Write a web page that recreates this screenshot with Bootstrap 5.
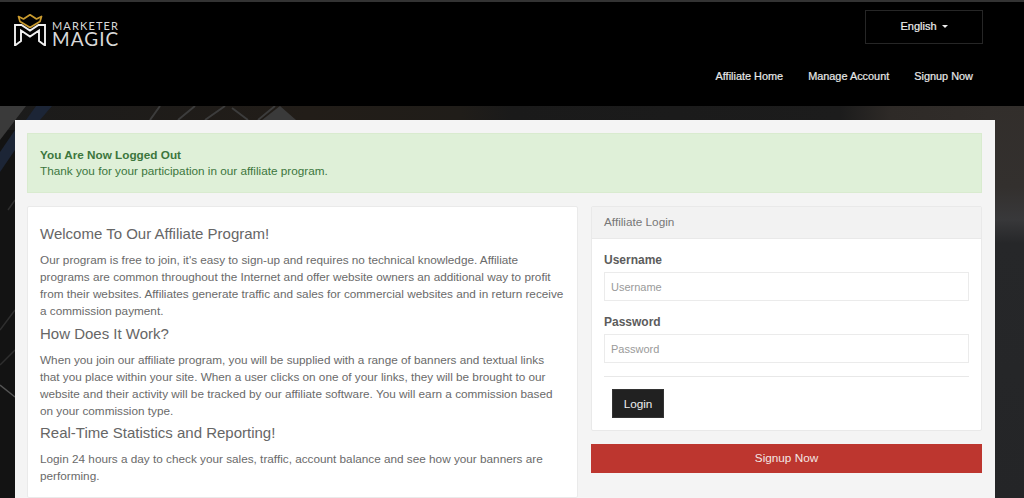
<!DOCTYPE html>
<html lang="en">
<head>
<meta charset="utf-8">
<title>Affiliate Program</title>
<link href="https://cdn.jsdelivr.net/npm/bootstrap@5.3.0/dist/css/bootstrap.min.css" rel="stylesheet">
<style>
html,body{height:498px;overflow:hidden}
body{font-family:"Liberation Sans",Arial,sans-serif;font-size:11.75px;line-height:17px;color:#6a6a6a;background:#1a1a1b;position:relative}
.scene{position:absolute;left:0;top:0;width:1024px;height:498px;z-index:0}
.site-top{position:relative;z-index:1;background:#000;height:106px;border-top:2px solid #333;display:flex;flex-direction:column;padding:0}
.top-line{display:flex;justify-content:space-between;align-items:flex-start;padding:8px 41px 0 14px;height:64px}
.brand{display:flex;align-items:flex-end;gap:6px;margin-top:4px;text-decoration:none;padding:0}
.brand-words{display:flex;flex-direction:column;font-family:"Lato","Liberation Sans",sans-serif;color:#d8d8d8;font-weight:400;line-height:1}
.brand-a{font-size:11px;letter-spacing:1.15px;line-height:12px;height:14px;padding-top:2px}
.brand-b{font-size:19px;letter-spacing:1.05px;line-height:14px;height:14px}
.lang-btn{width:118px;height:34px;border:1px solid #262626;border-radius:0;background:transparent;color:#eee;font-size:11px;padding:0 0 2px;display:flex;align-items:center;justify-content:center;-webkit-text-stroke:.2px #eee}
.lang-btn:hover,.lang-btn:active{background:transparent;color:#eee;border-color:#262626}
.lang-btn::after{margin-left:5px;border-top-width:.3em;border-left-width:.3em;border-right-width:.3em;vertical-align:middle}
.top-links{justify-content:flex-end;padding-right:51px;gap:25px;margin-top:2px}
.top-links .nav-link{padding:0;color:#e8e8e8;font-size:10.9px;font-weight:400;line-height:17px;-webkit-text-stroke:.2px #e8e8e8}
.sheet{position:relative;z-index:1;margin:14px 29px 0 15px;background:#f4f4f4;height:378px;padding:13px 13px 0 12px;overflow:hidden}
.note{background:#dff0d8;color:#3c763d;border:1px solid #d9ebcf;border-radius:0;padding:13px 12px;margin:0 0 13px;height:60px;line-height:16px;font-size:11.75px}
.note b{display:block;font-weight:700}
.cols{display:flex;gap:13px;align-items:flex-start}
.intro{width:551px;background:#fff;border:1px solid #eaeaea;border-radius:2px;height:292px;padding:13px 12px 0;flex:none}
.intro h4{font-size:15px;font-weight:400;line-height:18px;color:#666;margin:5.5px 0 8px}
.intro h4:first-child{margin-top:5px}
.intro p{margin:0}
.side{width:391px;flex:none}
.login-card{border:1px solid #e9e9e9;border-radius:2px;background:#fff;--bs-card-inner-border-radius:0;margin-bottom:13px}
.login-card .card-header{background:#f2f2f2;border-bottom:1px solid #e9e9e9;height:32px;padding:6px 12px;color:#777;line-height:17px;font-size:11.75px;border-radius:0}
.login-card .card-body{padding:13px 12px 12px;height:191px;color:#666}
.login-card .form-label{font-weight:700;color:#5c5c5c;margin:0 0 3px;display:block;font-size:12px;line-height:17px}
.field{height:29px;border:1px solid #ebebeb;border-radius:0;font-size:11px;padding:0 6px;box-shadow:none}
.field::placeholder{color:#9a9a9a}
.stack{margin-bottom:13px}
.rule{margin:13px 0 12px;border:0;border-top:1px solid #e8e8e8;opacity:1}
.go{background:#212121;color:#eee;border:1px solid #333;border-radius:0;width:52px;height:29px;padding:0;font-size:11.75px;margin-left:8px}
.go:hover{background:#212121;color:#eee}
.join{background:#bd362f;border:0;border-radius:0;color:#f3e6e4;height:29px;width:391px;padding:0 0 2px;font-size:11.75px;display:block}
.join:hover{background:#bd362f;color:#f3e6e4}
</style>
</head>
<body>
<svg class="scene" viewBox="0 0 1024 498" aria-hidden="true">
<defs>
<linearGradient id="rs" x1="0" y1="0" x2="0" y2="1"><stop offset="0" stop-color="#322e2b"/><stop offset=".22" stop-color="#33302e"/><stop offset=".3" stop-color="#38383a"/><stop offset=".36" stop-color="#262729"/><stop offset="1" stop-color="#242527"/></linearGradient>
<linearGradient id="ts" x1="0" y1="0" x2="1" y2="0"><stop offset="0" stop-color="#1b1b1b"/><stop offset=".3" stop-color="#221d18"/><stop offset=".45" stop-color="#201d19"/><stop offset=".5" stop-color="#1a1a1a"/><stop offset=".82" stop-color="#1c1c1c"/><stop offset=".87" stop-color="#2e2a27"/><stop offset="1" stop-color="#322e2b"/></linearGradient>
</defs>
<rect x="0" y="100" width="1024" height="30" fill="url(#ts)"/>
<rect x="0" y="130" width="15" height="368" fill="#131313"/>
<rect x="990" y="100" width="34" height="398" fill="url(#rs)"/>
<polygon points="0,106 26,106 0,140" fill="#3a3a3a"/>
<polygon points="36,106 52,106 40,120 26,120" fill="#1c2536"/>
<polygon points="15,130 15,150 0,172 0,152" fill="#1c2536"/>
<g stroke="#3c3c3c" stroke-width="2" fill="none">
<path d="M150 120 160 106M178 120 195 106M205 120 225 106M232 108 248 120M258 120 275 106"/>
</g>
<g stroke="#2e2e2e" stroke-width="1.5" fill="none">
<path d="M0 330 15 310M0 365 15 350M8 210 15 200"/>
</g>
<polygon points="262,120 280,106 296,120" fill="#3a3a3a"/>
<path d="M0 385 15 397" stroke="#555" stroke-width="1.5"/>
</svg>

<header class="site-top">
  <div class="top-line">
    <a class="brand" href="#">
      <svg width="32" height="32" viewBox="4 4 32 32" aria-hidden="true">
        <path d="M8.5 6.5 13.5 9 20 4.8 26.5 9 31.5 6.5 30 11.5 20 17.5 10 11.5Z" fill="none" stroke="#c99a2e" stroke-width="1.7" stroke-linejoin="round"/>
        <path d="M11 31V20.5L20 26.5 29 20.5V31L35 35.5V15H28.5L20 20.5 11.5 15H5V35.5Z" fill="none" stroke="#f0f0f0" stroke-width="1.9" stroke-linejoin="miter"/>
      </svg>
      <span class="brand-words"><span class="brand-a">MARKETER</span><span class="brand-b">MAGIC</span></span>
    </a>
    <div class="dropdown">
      <button class="btn lang-btn dropdown-toggle" type="button" data-bs-toggle="dropdown" aria-expanded="false">English</button>
      <ul class="dropdown-menu"><li><a class="dropdown-item" href="#">English</a></li></ul>
    </div>
  </div>
  <nav class="nav top-links">
    <a class="nav-link" href="#">Affiliate Home</a>
    <a class="nav-link" href="#">Manage Account</a>
    <a class="nav-link" href="#">Signup Now</a>
  </nav>
</header>

<main class="sheet">
  <div class="alert note" role="alert"><b>You Are Now Logged Out</b>Thank you for your participation in our affiliate program.</div>
  <div class="cols">
    <section class="intro">
      <h4>Welcome To Our Affiliate Program!</h4>
      <p>Our program is free to join, it's easy to sign-up and requires no technical knowledge. Affiliate programs are common throughout the Internet and offer website owners an additional way to profit from their websites. Affiliates generate traffic and sales for commercial websites and in return receive a commission payment.</p>
      <h4>How Does It Work?</h4>
      <p>When you join our affiliate program, you will be supplied with a range of banners and textual links that you place within your site. When a user clicks on one of your links, they will be brought to our website and their activity will be tracked by our affiliate software. You will earn a commission based on your commission type.</p>
      <h4>Real-Time Statistics and Reporting!</h4>
      <p>Login 24 hours a day to check your sales, traffic, account balance and see how your banners are performing.</p>
    </section>
    <aside class="side">
      <div class="card login-card">
        <div class="card-header">Affiliate Login</div>
        <div class="card-body">
          <div class="stack"><label class="form-label" for="u">Username</label><input id="u" class="form-control field" type="text" placeholder="Username"></div>
          <div><label class="form-label" for="p">Password</label><input id="p" class="form-control field" type="password" placeholder="Password"></div>
          <hr class="rule">
          <button class="btn go" type="button">Login</button>
        </div>
      </div>
      <a class="btn join" href="#"><span class="d-flex h-100 align-items-center justify-content-center">Signup Now</span></a>
    </aside>
  </div>
</main>
<script src="https://cdn.jsdelivr.net/npm/bootstrap@5.3.0/dist/js/bootstrap.bundle.min.js"></script>
</body>
</html>
